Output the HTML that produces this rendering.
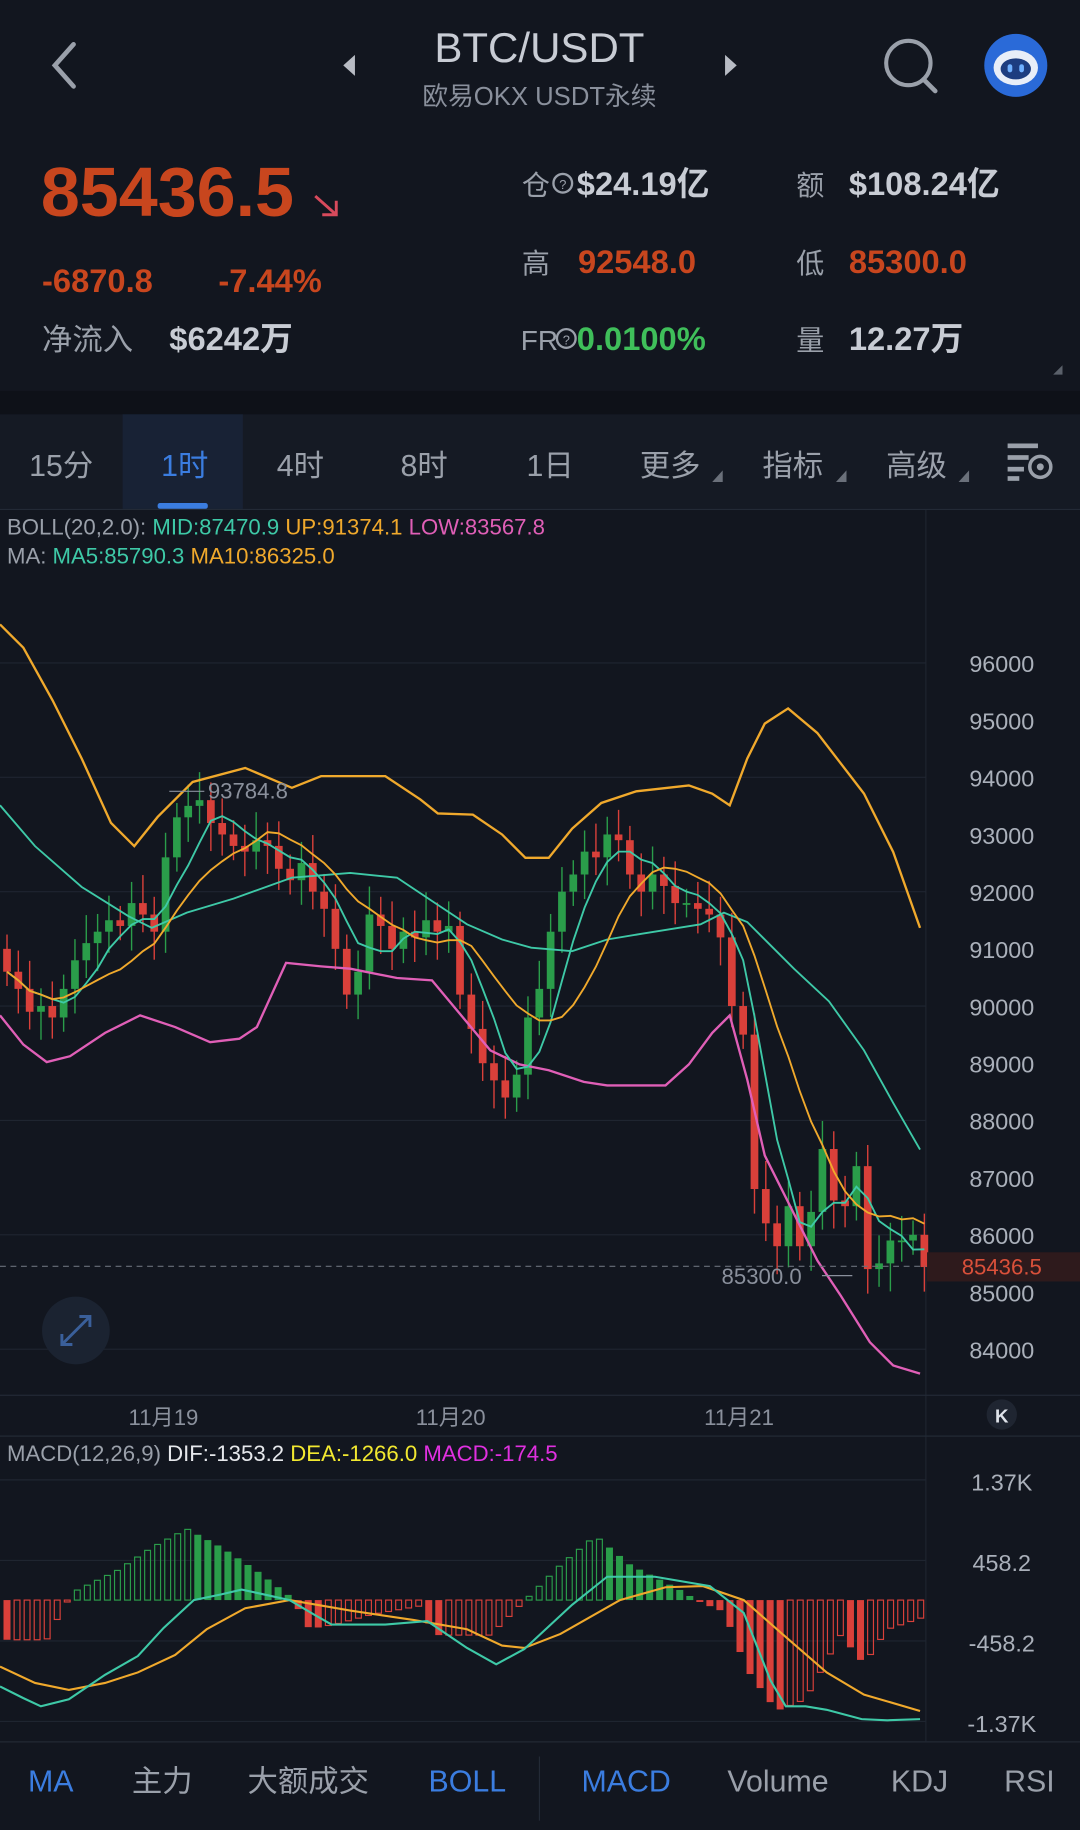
<!DOCTYPE html>
<html><head><meta charset="utf-8">
<style>
html,body{margin:0;padding:0;background:#12161f;}
svg{display:block;}
text{font-family:"Liberation Sans","Noto Sans CJK SC",sans-serif;}
</style></head>
<body>
<svg id="s" width="1080" height="1830" viewBox="0 0 925 1568" preserveAspectRatio="none" xmlns="http://www.w3.org/2000/svg">
<rect width="925" height="1568" fill="#12161f"/>
<!-- header -->
<path d="M63 38 L47 56 L63 74" stroke="#9aa0aa" stroke-width="4" fill="none" stroke-linecap="round"/>
<path d="M304 47 L294 56 L304 65 Z" fill="#b8bcc4"/>
<path d="M621 47 L631 56 L621 65 Z" fill="#b8bcc4"/>
<text x="462" y="53" text-anchor="middle" font-size="36" fill="#c8ccd4">BTC/USDT</text>
<text x="462" y="90" text-anchor="middle" font-size="22" fill="#8a909c">欧易OKX USDT永续</text>
<circle cx="778" cy="54" r="19" stroke="#9aa0aa" stroke-width="3.5" fill="none"/>
<path d="M791 68 L801 78" stroke="#9aa0aa" stroke-width="4" stroke-linecap="round"/>
<circle cx="870" cy="56" r="27" fill="#2a6ad8"/>
<ellipse cx="870" cy="58" rx="19" ry="15" fill="#e8eef8"/>
<ellipse cx="870" cy="59" rx="13" ry="9" fill="#1d3d80"/>
<rect x="863" y="55" width="4" height="7" rx="2" fill="#6fb0ff"/><rect x="873" y="55" width="4" height="7" rx="2" fill="#6fb0ff"/>
<!-- price block -->
<text x="35" y="185" font-size="60" font-weight="bold" fill="#c8461e">85436.5</text>
<path d="M270 168 L288 184 M288 172 L288 184 L276 184" stroke="#d84a5c" stroke-width="2.5" fill="none"/>
<text x="36" y="250" font-size="28" font-weight="bold" fill="#c8461e">-6870.8</text>
<text x="187" y="250" font-size="28" font-weight="bold" fill="#c8461e">-7.44%</text>
<text x="36" y="300" font-size="26" fill="#9aa0aa">净流入</text>
<text x="145" y="300" font-size="28" font-weight="bold" fill="#c8ccd4">$6242万</text>
<text x="447" y="167" font-size="24" fill="#9aa0aa">仓</text>
<circle cx="482" cy="157" r="8" stroke="#9aa0aa" stroke-width="2" fill="none"/><text x="482" y="162" text-anchor="middle" font-size="11" fill="#9aa0aa">?</text>
<text x="494" y="167" font-size="28" font-weight="bold" fill="#c8ccd4">$24.19亿</text>
<text x="682" y="167" font-size="24" fill="#9aa0aa">额</text>
<text x="727" y="167" font-size="28" font-weight="bold" fill="#c8ccd4">$108.24亿</text>
<text x="447" y="234" font-size="24" fill="#9aa0aa">高</text>
<text x="495" y="234" font-size="28" font-weight="bold" fill="#c8461e">92548.0</text>
<text x="682" y="234" font-size="24" fill="#9aa0aa">低</text>
<text x="727" y="234" font-size="28" font-weight="bold" fill="#c8461e">85300.0</text>
<text x="446" y="300" font-size="24" fill="#9aa0aa">FR</text>
<circle cx="485" cy="290" r="8" stroke="#9aa0aa" stroke-width="2" fill="none"/><text x="485" y="295" text-anchor="middle" font-size="11" fill="#9aa0aa">?</text>
<text x="494" y="300" font-size="28" font-weight="bold" fill="#3fbf5a">0.0100%</text>
<text x="682" y="300" font-size="24" fill="#9aa0aa">量</text>
<text x="727" y="300" font-size="28" font-weight="bold" fill="#c8ccd4">12.27万</text>
<path d="M910 313 L910 321 L902 321 Z" fill="#5a606a"/>
<rect x="0" y="335" width="925" height="20" fill="#0e1118"/>
<!-- tabs -->
<rect x="0" y="355" width="925" height="81" fill="#151a24"/>
<rect x="105" y="355" width="103" height="81" fill="#182235"/>
<rect x="135" y="431" width="43" height="5" rx="2" fill="#3b7de0"/>
<g font-size="26" fill="#9aa0aa">
<text x="25" y="408">15分</text>
<text x="138" y="408" fill="#3b7de0">1时</text>
<text x="237" y="408">4时</text>
<text x="343" y="408">8时</text>
<text x="451" y="408">1日</text>
<text x="548" y="408">更多</text>
<text x="653" y="408">指标</text>
<text x="759" y="408">高级</text>
</g>
<path d="M619 403 L619 413 L610 413 Z M725 403 L725 413 L716 413 Z M830 403 L830 413 L821 413 Z" fill="#6a707a"/>
<g fill="#9aa0aa"><rect x="863" y="380" width="26" height="4"/><rect x="863" y="390" width="18" height="4"/><rect x="863" y="400" width="14" height="4"/><rect x="863" y="408" width="10" height="4"/></g>
<circle cx="891" cy="400" r="9" stroke="#9aa0aa" stroke-width="3" fill="none"/><circle cx="891" cy="400" r="3" fill="#9aa0aa"/>
<rect x="0" y="436" width="925" height="1" fill="#232a36"/>
<!-- chart grid -->
<g stroke="#1f2530" stroke-width="1">
<line x1="0" y1="568" x2="793" y2="568"/><line x1="0" y1="666" x2="793" y2="666"/><line x1="0" y1="764" x2="793" y2="764"/><line x1="0" y1="862" x2="793" y2="862"/><line x1="0" y1="960" x2="793" y2="960"/><line x1="0" y1="1058" x2="793" y2="1058"/><line x1="0" y1="1156" x2="793" y2="1156"/>
<line x1="793" y1="437" x2="793" y2="1492"/>
</g>
<g font-size="20" fill="#aab0ba" text-anchor="middle">
<text x="858" y="576">96000</text><text x="858" y="625">95000</text><text x="858" y="674">94000</text><text x="858" y="723">93000</text><text x="858" y="772">92000</text><text x="858" y="821">91000</text><text x="858" y="870">90000</text><text x="858" y="919">89000</text><text x="858" y="968">88000</text><text x="858" y="1017">87000</text><text x="858" y="1066">86000</text><text x="858" y="1115">85000</text><text x="858" y="1164">84000</text>
</g>
<text x="6" y="458" font-size="19" fill="#9aa0aa">BOLL(20,2.0): <tspan fill="#3ec9a7">MID:87470.9</tspan> <tspan fill="#f0a92c">UP:91374.1</tspan> <tspan fill="#e05fb7">LOW:83567.8</tspan></text>
<text x="6" y="483" font-size="19" fill="#9aa0aa">MA: <tspan fill="#3ec9a7">MA5:85790.3</tspan> <tspan fill="#f0a92c">MA10:86325.0</tspan></text>
<g id="candles"></g>
<!-- boll lines -->
<polyline fill="none" stroke="#f0a92c" stroke-width="2" points="0,535 20,555 45,600 70,650 95,705 115,725 135,700 165,670 210,658 250,675 275,665 330,665 360,685 375,697 405,698 430,715 450,735 470,735 490,710 515,688 545,678 590,673 610,680 625,690 640,650 655,620 675,607 700,628 740,680 765,730 788,795"/>
<polyline fill="none" stroke="#e05fb7" stroke-width="2" points="0,870 20,895 40,910 60,905 90,885 120,870 150,880 180,893 205,890 220,880 245,825 275,828 300,830 340,838 370,840 395,870 420,900 445,912 470,917 500,927 520,930 570,930 590,912 610,885 625,870 640,925 655,990 680,1040 700,1080 720,1110 745,1150 765,1170 788,1177"/>
<polyline fill="none" stroke="#3ec9a7" stroke-width="1.6" points="0,690 30,725 70,760 110,785 130,795 160,782 200,770 250,752 300,748 340,752 370,772 400,792 430,805 455,812 490,815 520,805 550,800 600,792 620,782 640,790 680,830 710,858 740,900 765,945 788,985"/>
<g id="mas"></g>
<!-- price marks -->
<line x1="0" y1="1085" x2="793" y2="1085" stroke="#6a707a" stroke-width="1" stroke-dasharray="5,4"/>
<rect x="794" y="1073" width="131" height="25" fill="#2e1a1c"/>
<text x="858" y="1092" text-anchor="middle" font-size="19" fill="#d9503a">85436.5</text>
<text x="618" y="1100" font-size="19" fill="#8a909c">85300.0</text>
<line x1="704" y1="1093" x2="730" y2="1093" stroke="#8a909c"/>
<line x1="145" y1="678" x2="175" y2="678" stroke="#8a909c"/>
<text x="178" y="684" font-size="19" fill="#8a909c">93784.8</text>
<circle cx="65" cy="1140" r="29" fill="#1b2331"/>
<path d="M53 1152 L77 1128 M68 1128 L77 1128 L77 1137 M53 1143 L53 1152 L62 1152" stroke="#3a5f9a" stroke-width="2.5" fill="none"/>
<!-- date axis -->
<rect x="0" y="1195" width="925" height="1" fill="#232a36"/>
<rect x="0" y="1230" width="925" height="1" fill="#232a36"/>
<g font-size="19" fill="#8a909c" text-anchor="middle"><text x="140" y="1221">11月19</text><text x="386" y="1221">11月20</text><text x="633" y="1221">11月21</text></g>
<circle cx="858" cy="1212" r="13" fill="#1f2531"/>
<text x="858" y="1219" text-anchor="middle" font-size="16" font-weight="bold" fill="#dfe3ea">K</text>
<!-- macd -->
<text x="6" y="1252" font-size="19" fill="#9aa0aa">MACD(12,26,9) <tspan fill="#e6e8ec">DIF:-1353.2</tspan> <tspan fill="#f2e830">DEA:-1266.0</tspan> <tspan fill="#e030e0">MACD:-174.5</tspan></text>
<g stroke="#1f2530"><line x1="0" y1="1268" x2="793" y2="1268"/><line x1="0" y1="1337" x2="793" y2="1337"/><line x1="0" y1="1406" x2="793" y2="1406"/><line x1="0" y1="1475" x2="793" y2="1475"/></g>
<g font-size="20" fill="#aab0ba" text-anchor="middle"><text x="858" y="1277">1.37K</text><text x="858" y="1346">458.2</text><text x="858" y="1415">-458.2</text><text x="858" y="1484">-1.37K</text></g>
<g id="hist"></g>
<polyline fill="none" stroke="#f0a92c" stroke-width="1.8" points="0,1428 30,1442 59,1448 90,1442 118,1433 150,1418 177,1396 210,1378 248,1371 300,1380 354,1388 400,1396 430,1410 449,1412 480,1400 531,1371 570,1360 602,1359 637,1371 670,1400 708,1433 740,1452 788,1466"/>
<polyline fill="none" stroke="#3ec9a7" stroke-width="1.8" points="0,1445 20,1455 35,1462 59,1456 90,1435 118,1419 140,1395 166,1371 190,1366 207,1362 230,1367 248,1371 270,1384 284,1392 330,1392 366,1389 400,1412 425,1426 449,1413 490,1375 520,1351 561,1351 608,1359 637,1382 660,1440 673,1462 690,1462 708,1465 738,1473 760,1474 788,1473"/>
<rect x="0" y="1492" width="925" height="1" fill="#232a36"/>
<!-- bottom -->
<g font-size="26" fill="#9aa0aa">
<text x="24" y="1535" fill="#3b7de0">MA</text>
<text x="113" y="1535">主力</text>
<text x="212" y="1535">大额成交</text>
<text x="367" y="1535" fill="#3b7de0">BOLL</text>
<text x="498" y="1535" fill="#3b7de0">MACD</text>
<text x="623" y="1535">Volume</text>
<text x="763" y="1535">KDJ</text>
<text x="860" y="1535">RSI</text>
</g>
<line x1="462" y1="1505" x2="462" y2="1560" stroke="#232a36"/>
</svg>
<script>
(function(){
var NS="http://www.w3.org/2000/svg";
function Y(p){return 568+(96000-p)*0.049;}
var C=[90600,90300,89900,90000,89800,90300,90800,91100,91300,91500,91400,91800,91600,91300,92600,93300,93500,93600,93200,93000,92800,92700,92900,92800,92400,92200,92500,92000,91700,91000,90200,90600,91600,91400,91000,91300,91200,91500,91300,91400,90200,89600,89000,88700,88400,88800,89800,90300,91300,92000,92300,92700,92600,93000,92900,92300,92000,92300,92100,91800,91800,91700,91600,91200,90000,89500,86800,86200,85800,86500,85800,86400,87500,86600,86500,87200,85400,85500,85900,85900,86000,85436];
var g=document.getElementById("candles"),h="";
var o=91000;
for(var i=0;i<C.length;i++){
 var x=6+i*9.7,c=C[i],up=c>=o,col=up?"#2a9d4a":"#d9403a";
 var hi=Math.max(o,c)+250+((i*37)%5)*60,lo=Math.min(o,c)-250-((i*53)%5)*60;
 var t=Y(Math.max(o,c)),b=Y(Math.min(o,c));if(b-t<1.5)b=t+1.5;
 h+='<line x1="'+x+'" y1="'+Y(hi)+'" x2="'+x+'" y2="'+Y(lo)+'" stroke="'+col+'" stroke-width="1.2"/>';
 h+='<rect x="'+(x-3.3)+'" y="'+t+'" width="6.6" height="'+(b-t)+'" fill="'+col+'"/>';
 o=c;
}
g.innerHTML=h;
function ma(n,col){var p=[];for(var i=0;i<C.length;i++){var s=0,k=0;for(var j=Math.max(0,i-n+1);j<=i;j++){s+=C[j];k++;}p.push((6+i*9.7).toFixed(1)+","+Y(s/k).toFixed(1));}return '<polyline fill="none" stroke="'+col+'" stroke-width="1.6" points="'+p.join(" ")+'"/>';}
document.getElementById("mas").innerHTML=ma(5,"#3ec9a7")+ma(10,"#f0a92c");
var K=[[0,-34],[40,-34],[55,-5],[65,8],[100,25],[130,45],[160,61],[190,45],[220,25],[250,2],[265,-25],[290,-20],[320,-12],[360,-5],[372,-30],[420,-30],[440,-10],[455,5],[480,30],[510,55],[540,30],[580,10],[600,-2],[620,-10],[640,-60],[665,-95],[690,-85],[720,-30],[740,-55],[760,-25],[790,-15]];
function v(x){for(var i=1;i<K.length;i++){if(x<=K[i][0]){var a=K[i-1],b=K[i];return a[1]+(b[1]-a[1])*(x-a[0])/(b[0]-a[0]);}}return K[K.length-1][1];}
var z=1371,hh="",pv=0;
for(var x=6;x<=790;x+=8.6){var val=v(x),d=Math.abs(val);var fill,col;
 if(val>=0){col="#2a9d4a";fill=val<pv;}else{col="#d9403a";fill=val<pv;}
 var yy=val>=0?z-d:z;if(d<1.5)d=1.5;
 hh+=fill?'<rect x="'+(x-3)+'" y="'+yy+'" width="6" height="'+d+'" fill="'+col+'"/>':'<rect x="'+(x-2.5)+'" y="'+yy+'" width="5" height="'+d+'" fill="none" stroke="'+col+'" stroke-width="1"/>';
 pv=val;}
document.getElementById("hist").innerHTML=hh;
})();
</script>
</body></html>
